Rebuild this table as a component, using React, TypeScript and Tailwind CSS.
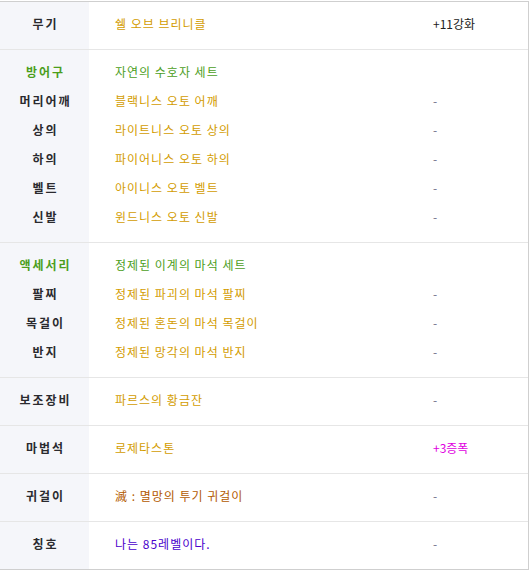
const ORANGE = "text-[#d39c00]";
const GREEN = "text-[#4c9e1c]";
const DASH = "text-[#70708a]";

type Line = {
  label: string;
  labelClass?: string;
  item: string;
  itemClass: string;
  extra?: string;
  extraClass?: string;
};

const groups: Line[][] = [
  [{ label: "무기", item: "쉘 오브 브리니클", itemClass: ORANGE, extra: "+11강화", extraClass: "text-[#222]" }],
  [
    { label: "방어구", labelClass: GREEN, item: "자연의 수호자 세트", itemClass: GREEN },
    { label: "머리어깨", item: "블랙니스 오토 어깨", itemClass: ORANGE, extra: "-" },
    { label: "상의", item: "라이트니스 오토 상의", itemClass: ORANGE, extra: "-" },
    { label: "하의", item: "파이어니스 오토 하의", itemClass: ORANGE, extra: "-" },
    { label: "벨트", item: "아이니스 오토 벨트", itemClass: ORANGE, extra: "-" },
    { label: "신발", item: "윈드니스 오토 신발", itemClass: ORANGE, extra: "-" },
  ],
  [
    { label: "액세서리", labelClass: GREEN, item: "정제된 이계의 마석 세트", itemClass: GREEN },
    { label: "팔찌", item: "정제된 파괴의 마석 팔찌", itemClass: ORANGE, extra: "-" },
    { label: "목걸이", item: "정제된 혼돈의 마석 목걸이", itemClass: ORANGE, extra: "-" },
    { label: "반지", item: "정제된 망각의 마석 반지", itemClass: ORANGE, extra: "-" },
  ],
  [{ label: "보조장비", item: "파르스의 황금잔", itemClass: ORANGE, extra: "-" }],
  [{ label: "마법석", item: "로제타스톤", itemClass: ORANGE, extra: "+3증폭", extraClass: "text-[#e000e0]" }],
  [{ label: "귀걸이", item: "滅 : 멸망의 투기 귀걸이", itemClass: "text-[#b35a00]", extra: "-" }],
  [{ label: "칭호", item: "나는 85레벨이다.", itemClass: "text-[#4a00cc]", extra: "-" }],
];

export default function App() {
  return (
    <div className="bg-white pt-px" style={{ fontFamily: '"Noto Sans CJK KR", "Noto Sans", sans-serif' }}>
      <div className="w-[529px] border-y border-r border-[#cfcfcf] text-[12px]">
        {groups.map((lines, gi) => (
          <div key={gi} className={`flex ${gi > 0 ? "border-t border-[#e6e6e6]" : ""}`}>
            <div className="w-[89px] shrink-0 bg-[#f5f6fa] pt-[7px] pb-[11px]">
              {lines.map((l) => (
                <div
                  key={l.label}
                  className={`flex h-[29px] items-center justify-center pl-[2px] font-bold tracking-[2px] ${l.labelClass ?? "text-[#2a2a2e]"}`}
                >
                  {l.label}
                </div>
              ))}
            </div>
            <div className="flex-1 pt-[7px] pb-[11px]">
              {lines.map((l) => (
                <div key={l.label} className="flex h-[29px] items-center">
                  <div className={`w-[344px] pl-[26px] tracking-[1px] ${l.itemClass}`}>{l.item}</div>
                  <div className={l.extraClass ?? DASH}>{l.extra ?? ""}</div>
                </div>
              ))}
            </div>
          </div>
        ))}
      </div>
    </div>
  );
}
